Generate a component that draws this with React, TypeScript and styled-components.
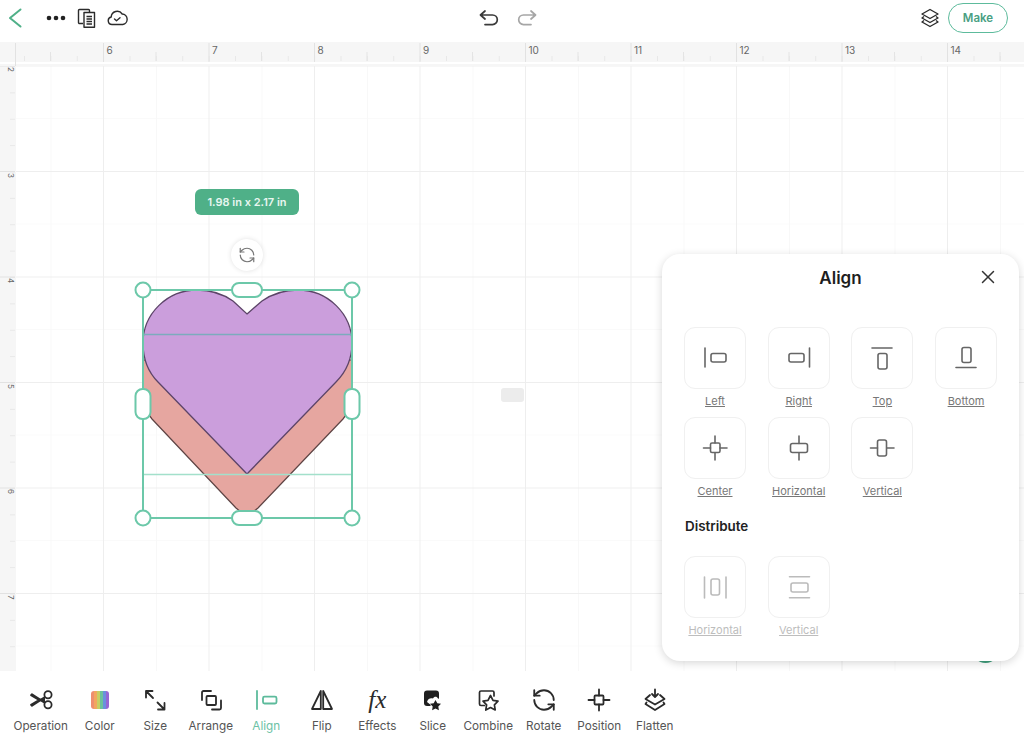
import React from 'react';
import styled, { createGlobalStyle } from 'styled-components';
import { RefreshCcw, X } from 'lucide-react';

const TEAL = '#5dbb9c';
const ICON = '#2b2b2b';

const GlobalStyle = createGlobalStyle`
  html, body {
    margin: 0;
    padding: 0;
    background: #fff;
  }
  body {
    font-family: Inter, "Liberation Sans", sans-serif;
  }
`;

const Page = styled.div`
  width: 1024px;
  height: 742px;
  display: flex;
  flex-direction: column;
  overflow: hidden;
  background: #fff;
`;

/* top bar */

const TopBar = styled.header`
  height: 42px;
  flex: none;
  display: flex;
  align-items: center;
  padding: 0 16px 6px 8px;
  box-sizing: border-box;
`;

const BarSide = styled.div<{ $end?: boolean }>`
  flex: 1;
  display: flex;
  align-items: center;
  justify-content: ${(p) => (p.$end ? 'flex-end' : 'flex-start')};
`;

const BarCenter = styled.div`
  display: flex;
  align-items: center;
  gap: 18px;
`;

const BackIcon = styled.svg`
  margin-right: 23px;
`;

const ToolIcon = styled.svg<{ $gap?: number }>`
  margin-right: ${(p) => p.$gap ?? 0}px;
  flex: none;
`;

const MakeButton = styled.button`
  width: 60px;
  height: 30px;
  margin-left: 8px;
  border: 1.5px solid ${TEAL};
  border-radius: 15px;
  background: #fff;
  color: #4a9f83;
  font: 600 11.5px Inter, "Liberation Sans", sans-serif;
  padding: 0;
`;

/* rulers */

const TopRuler = styled.div`
  height: 24px;
  flex: none;
  display: flex;
  padding-left: 103.5px;
  box-sizing: border-box;
  background:
    linear-gradient(to right, #e2e2e2 1px, transparent 1px) 103px 1px / 105.5px 19px repeat-x,
    linear-gradient(to right, #e2e2e2 1px, transparent 1px) 15px 1px / 1100px 23px no-repeat,
    linear-gradient(to right, #e4e4e4 1px, transparent 1px) 50px 10px / 105.5px 9px repeat-x,
    linear-gradient(to right, #e8e8e8 1px, transparent 1px) 24px 14px / 26.375px 5px repeat-x,
    linear-gradient(to bottom, #f6f6f6 20px, #fff 20px, #fff 22px, #f6f6f6 22px);
`;

const RulerCell = styled.div`
  flex: none;
  width: 105.5px;
  padding: 2px 0 0 3px;
  box-sizing: border-box;
  font-size: 10px;
  line-height: 12px;
  color: #666;
`;

const Middle = styled.div`
  flex: 1;
  display: flex;
  min-height: 0;
`;

const SideRuler = styled.div`
  width: 16px;
  flex: none;
  display: flex;
  flex-direction: column;
  background:
    linear-gradient(to bottom, #e2e2e2 1px, transparent 1px) 0 105px / 15px 105.5px repeat-y,
    linear-gradient(to bottom, #e8e8e8 1px, transparent 1px) 10px 0 / 5px 26.375px repeat-y,
    #f6f6f6;
`;

const SideRulerCell = styled.div`
  flex: none;
  height: 105.5px;
  padding: 1px 0 0 1px;
  box-sizing: border-box;
  writing-mode: vertical-rl;
  font-size: 8px;
  line-height: 10px;
  color: #666;
`;

/* canvas */

const Canvas = styled.main`
  flex: 1;
  position: relative;
  overflow: hidden;
  background:
    linear-gradient(to right, #eeeeee 1px, transparent 1px) 87px 0 / 105.5px 100% repeat-x,
    linear-gradient(to bottom, #eeeeee 1px, transparent 1px) 0 105px / 100% 105.5px repeat-y,
    linear-gradient(to right, #f8f8f8 1px, transparent 1px) 34.5px 0 / 105.5px 100% repeat-x,
    linear-gradient(to bottom, #fafafa 1px, transparent 1px) 0 52px / 100% 105.5px repeat-y,
    #fff;
`;

const Artwork = styled.svg`
  position: absolute;
  left: 104px;
  top: 204px;
`;

const SizeBadge = styled.div`
  position: absolute;
  left: 179px;
  top: 123px;
  width: 104px;
  height: 26px;
  border-radius: 6px;
  background: #4fb088;
  color: #e8f6f0;
  font-size: 11px;
  font-weight: 600;
  line-height: 26px;
  text-align: center;
`;

const RotateButton = styled.div`
  position: absolute;
  left: 215px;
  top: 173px;
  width: 32px;
  height: 32px;
  border-radius: 50%;
  background: #fff;
  box-shadow: 0 0 5px rgba(0, 0, 0, 0.12);
  display: flex;
  align-items: center;
  justify-content: center;
  color: #777;
`;

const GhostChip = styled.div`
  position: absolute;
  left: 485px;
  top: 322px;
  width: 23px;
  height: 14px;
  border-radius: 3px;
  background: #ececec;
`;

const HiddenFab = styled.div`
  position: absolute;
  left: 956px;
  top: 570px;
  width: 27px;
  height: 27px;
  border-radius: 50%;
  background: #3f9f7c;
`;

/* align panel */

const Panel = styled.section`
  position: absolute;
  left: 646px;
  top: 188px;
  width: 357px;
  height: 407px;
  padding: 0 22px;
  box-sizing: border-box;
  border-radius: 18px;
  background: #fff;
  box-shadow: 0 2px 8px rgba(0, 0, 0, 0.16);
`;

const PanelHeader = styled.div`
  height: 73px;
  display: flex;
  align-items: flex-start;
  justify-content: center;
  position: relative;
`;

const PanelTitle = styled.h2`
  margin: 14px 0 0;
  font-size: 17px;
  line-height: 20px;
  font-weight: 600;
  color: #1d1d1d;
`;

const CloseButton = styled.div`
  position: absolute;
  right: -2px;
  top: 12px;
  color: #333;
  display: flex;
`;

const TileGrid = styled.div`
  display: grid;
  grid-template-columns: repeat(4, 62px);
  column-gap: 21.7px;
  row-gap: 9px;
`;

const Tile = styled.div`
  display: flex;
  flex-direction: column;
  align-items: center;
`;

const TileBox = styled.div`
  width: 62px;
  height: 62px;
  box-sizing: border-box;
  border: 1px solid #f0f0f0;
  border-radius: 11px;
  display: flex;
  align-items: center;
  justify-content: center;
`;

const TileLabel = styled.span<{ $muted?: boolean }>`
  margin-top: 5px;
  font-size: 11px;
  line-height: 14px;
  white-space: nowrap;
  text-decoration: underline;
  color: ${(p) => (p.$muted ? '#bdbdbd' : '#777')};
`;

const SectionTitle = styled.h3`
  margin: 20px 0 22px 1px;
  font-size: 13.4px;
  line-height: 16px;
  font-weight: 600;
  color: #222;
`;

/* bottom toolbar */

const BottomBar = styled.nav`
  height: 71px;
  flex: none;
  display: flex;
  padding: 16px 0 0 13px;
  box-sizing: border-box;
  background: #fff;
`;

const ToolItem = styled.div<{ $active?: boolean }>`
  flex: none;
  width: 55.5px;
  display: flex;
  flex-direction: column;
  align-items: center;
  gap: 6px;
  color: ${(p) => (p.$active ? '#6cc2a5' : '#555')};

  &:first-child {
    margin-right: 3.5px;
  }
`;

const ToolLabel = styled.span`
  font-size: 11.7px;
  line-height: 14px;
  white-space: nowrap;
`;

const FxGlyph = styled.span`
  height: 26px;
  font: italic 25px/25px "Liberation Serif", serif;
  color: #2b2b2b;
`;

const AlignGlyph = ({ children, muted }: { children: React.ReactNode; muted?: boolean }) => (
  <svg width="30" height="30" viewBox="0 0 30 30" fill="none" stroke={muted ? '#bbb' : '#666'} strokeWidth="1.6" strokeLinecap="round">
    {children}
  </svg>
);

const alignOptions = [
  { label: 'Left', glyph: <><path d="M5 5v19" /><rect x="11" y="10.500" width="15" height="8.500" rx="2" /></> },
  { label: 'Right', glyph: <><path d="M25.500 5v19" /><rect x="5" y="10.500" width="15" height="8.500" rx="2" /></> },
  { label: 'Top', glyph: <><path d="M5 5h20" /><rect x="11" y="10.500" width="9" height="15.500" rx="2" /></> },
  { label: 'Bottom', glyph: <><path d="M5 24.500h20" /><rect x="11" y="4.500" width="9" height="15" rx="2" /></> },
  { label: 'Center', glyph: <><path d="M15 3v7M15 20v7M3.500 15h7M20 15h7" /><rect x="10.500" y="10" width="9.500" height="9.500" rx="1.500" /></> },
  { label: 'Horizontal', glyph: <><path d="M15 3v7.500M15 20v7" /><rect x="6.500" y="10.500" width="17" height="9" rx="2" /></> },
  { label: 'Vertical', glyph: <><path d="M3.500 15h7M20 15h7" /><rect x="10.500" y="7" width="9" height="16" rx="2" /></> },
];

const distributeOptions = [
  { label: 'Horizontal', glyph: <><path d="M4.500 5v21M26 5v21" /><rect x="11" y="7" width="8.500" height="16" rx="2" /></> },
  { label: 'Vertical', glyph: <><path d="M5.500 4.700h20M5.500 25.700h20" /><rect x="7" y="11" width="17" height="9" rx="2" /></> },
];

const Icon = ({ children, color = ICON, sw = 1.8 }: { children: React.ReactNode; color?: string; sw?: number }) => (
  <svg width="26" height="26" viewBox="0 0 26 26" fill="none" stroke={color} strokeWidth={sw} strokeLinecap="round" strokeLinejoin="round">
    {children}
  </svg>
);

const tools: { label: string; active?: boolean; icon: React.ReactNode }[] = [
  {
    label: 'Operation',
    icon: (
      <svg width="26" height="26" viewBox="0 0 26 26" fill="none" stroke={ICON} strokeWidth="1.800">
        <circle cx="20" cy="7.800" r="3.600" />
        <circle cx="20" cy="17.800" r="3.600" />
        <path d="M17 10 12.500 12.800 4 7.200 3 8.200 11 13 3 17.800 4 18.800 12.500 13.200 17 16" fill="#2b2b2b" strokeLinejoin="round" />
      </svg>
    ),
  },
  {
    label: 'Color',
    icon: (
      <svg width="26" height="26" viewBox="0 0 26 26">
        <defs>
          <clipPath id="swatch">
            <rect x="4" y="4" width="18" height="18" rx="3" />
          </clipPath>
        </defs>
        <g clipPath="url(#swatch)">
          <rect x="4" y="4" width="3" height="18" fill="#ee8f6e" />
          <rect x="7" y="4" width="3" height="18" fill="#f2a65f" />
          <rect x="10" y="4" width="3" height="18" fill="#c7cf63" />
          <rect x="13" y="4" width="3" height="18" fill="#6cc39b" />
          <rect x="16" y="4" width="3" height="18" fill="#6a92dd" />
          <rect x="19" y="4" width="3" height="18" fill="#9668d4" />
        </g>
      </svg>
    ),
  },
  {
    label: 'Size',
    icon: (
      <Icon>
        <path d="M4 4l7 7M4 4h6.500M4 4v6.500M22.500 22.500l-7-7M22.500 22.500H16M22.500 22.500V16" />
      </Icon>
    ),
  },
  {
    label: 'Arrange',
    icon: (
      <Icon>
        <path d="M4 13V5.500A1.500 1.500 0 0 1 5.500 4H13M23 13.500V21a1.500 1.500 0 0 1-1.500 1.500H14" />
        <rect x="8.500" y="9" width="9.500" height="9" rx="1" />
      </Icon>
    ),
  },
  {
    label: 'Align',
    active: true,
    icon: (
      <Icon color={TEAL}>
        <path d="M4 4v18" />
        <rect x="10" y="9.700" width="13.500" height="6.800" rx="1.500" />
      </Icon>
    ),
  },
  {
    label: 'Flip',
    icon: (
      <Icon>
        <path d="M11.800 4 3 22h8.800zM14.200 4 23 22h-8.800z" />
      </Icon>
    ),
  },
  { label: 'Effects', icon: <FxGlyph>fx</FxGlyph> },
  {
    label: 'Slice',
    icon: (
      <svg width="26" height="26" viewBox="0 0 26 26">
        <rect x="4" y="3.500" width="15" height="15.500" rx="3" fill="#1f1f1f" />
        <path d="M7 15c1-4 4-4 6-3.500 1-2.500 4-2.500 5 0l4 1-3 3.500.6 5-4.600-2.300-4.600 2.300.2-3.300z" fill="#fff" />
        <path d="m15.500 13 1.800 3.200 3.700.6-2.700 2.700.6 3.700-3.400-1.800-3.400 1.800.6-3.700-2.700-2.700 3.700-.6z" fill="#1f1f1f" />
      </svg>
    ),
  },
  {
    label: 'Combine',
    icon: (
      <Icon sw={1.700}>
        <path d="M9.500 18.500H6a1.500 1.500 0 0 1-1.500-1.500V5.500A1.500 1.500 0 0 1 6 4h11.500A1.500 1.500 0 0 1 19 5.500V9" />
        <path d="m15.500 8.500 2.500 4.800 5 .8-3.600 3.700.8 5.200-4.700-2.400-4.700 2.400.8-5.200-3.600-3.700 5-.8z" fill="#fff" />
      </Icon>
    ),
  },
  {
    label: 'Rotate',
    icon: <RefreshCcw size={26} strokeWidth={1.700} color={ICON} />,
  },
  {
    label: 'Position',
    icon: (
      <Icon>
        <path d="M13 2.500v6M13 17.500v6M2.500 13h6M17.500 13h6" />
        <rect x="8.500" y="8.500" width="9" height="9" rx="1" />
      </Icon>
    ),
  },
  {
    label: 'Flatten',
    icon: (
      <Icon>
        <path d="M13 2.500v7M10 7l3 3 3-3" />
        <path d="M8 8 3.500 12 13 17.500 22.500 12 18 8" />
        <path d="M4.500 15.500 3.500 17 13 23l9.500-6-1-1.500" />
      </Icon>
    ),
  },
];

const Handle = ({ x, y, wide }: { x: number; y: number; wide?: boolean }) => (
  <rect
    x={x - (wide ? 15 : 7.5)}
    y={y - (wide ? 7 : 15)}
    width={wide ? 30 : 15}
    height={wide ? 14 : 30}
    rx="7"
    fill="#fff"
    stroke="#6cc8a9"
    strokeWidth="2"
  />
);

const App = () => (
  <Page>
    <GlobalStyle />
    <TopBar>
      <BarSide>
        <BackIcon width="15" height="20" viewBox="0 0 15 20" fill="none" stroke="#4fb088" strokeWidth="2" strokeLinecap="round" strokeLinejoin="round">
          <path d="M12.500 1.500 2 10l10.500 8.500" />
        </BackIcon>
        <ToolIcon width="20" height="6" viewBox="0 0 20 6" fill="#222" $gap={11}>
          <circle cx="3" cy="3" r="2.300" />
          <circle cx="10" cy="3" r="2.300" />
          <circle cx="17" cy="3" r="2.300" />
        </ToolIcon>
        <ToolIcon width="19" height="20" viewBox="0 0 19 20" fill="none" stroke="#2b2b2b" strokeWidth="1.400" strokeLinejoin="round" $gap={11}>
          <path d="M6 15.500H2.500a1 1 0 0 1-1-1V2.500a1 1 0 0 1 1-1h9a1 1 0 0 1 1 1V4" />
          <path d="M7 4.500h10.500v14.800H7z" />
          <path d="M9.500 8.500h5.500M9.500 11h5.500M9.500 13.500h5.500M9.500 16h5.500" />
        </ToolIcon>
        <ToolIcon width="21" height="16" viewBox="0 0 21 16" fill="none" stroke="#2b2b2b" strokeWidth="1.400" strokeLinecap="round" strokeLinejoin="round">
          <path d="M15.800 14.500H5a3.800 3.800 0 0 1-.8-7.500 6 6 0 0 1 11-3 5.300 5.300 0 0 1 .6 10.500z" />
          <path d="m7.500 9 2 1.800 3.500-3" />
        </ToolIcon>
      </BarSide>
      <BarCenter>
        <svg width="20" height="16" viewBox="0 0 20 16" fill="none" stroke="#3a3a3a" strokeWidth="1.700" strokeLinecap="round" strokeLinejoin="round">
          <path d="M6 1 1.500 5 6 9M1.500 5H13.500a4.800 4.800 0 0 1 0 9.600H6" />
        </svg>
        <svg width="20" height="16" viewBox="0 0 20 16" fill="none" stroke="#a6a6a6" strokeWidth="1.700" strokeLinecap="round" strokeLinejoin="round">
          <path d="M14 1l4.500 4L14 9M18.500 5H6.500a4.800 4.800 0 0 0 0 9.600H14" />
        </svg>
      </BarCenter>
      <BarSide $end>
        <ToolIcon width="20" height="20" viewBox="0 0 20 20" fill="none" stroke="#2b2b2b" strokeWidth="1.400" strokeLinejoin="round">
          <path d="M10 1.500 18 6l-8 4.500L2 6z" />
          <path d="M4 8.500 2 10l8 4.500 8-4.500-2-1.500" />
          <path d="M4 12.500 2 14l8 4.500 8-4.500-2-1.500" />
        </ToolIcon>
        <MakeButton>Make</MakeButton>
      </BarSide>
    </TopBar>

    <TopRuler>
      {[6, 7, 8, 9, 10, 11, 12, 13, 14].map((n) => (
        <RulerCell key={n}>{n}</RulerCell>
      ))}
    </TopRuler>

    <Middle>
      <SideRuler>
        {[2, 3, 4, 5, 6, 7].map((n) => (
          <SideRulerCell key={n}>{n}</SideRulerCell>
        ))}
      </SideRuler>

      <Canvas>
        <Artwork width="250" height="260" viewBox="120 270 250 260">
          <path
            d="M143 360V395C143 405 146 412 152 419L236 508Q247 518 258 508L343 419C349 412 352 405 352 395V360Z"
            fill="#e6a6a0"
            stroke="#5e4444"
            strokeWidth="1.200"
          />
          <path
            d="M247 314L262 301C272 294 285 290 298 290C328 290 352 314 352 343C352 358 346 372 336 382L247 474L158 382C148 372 143 358 143 343C143 314 167 290 197 290C210 290 223 294 233 301Z"
            fill="#cb9edc"
            stroke="#5c4468"
            strokeWidth="1.300"
          />
          <path d="M143 334.500H352" stroke="#7cabbd" strokeWidth="1.500" />
          <path d="M143 474.500H352" stroke="#a3e0cb" strokeWidth="1.500" />
          <rect x="143" y="290" width="209" height="228" fill="none" stroke="#6cc8a9" strokeWidth="2" />
          <circle cx="143" cy="290" r="7.500" fill="#fff" stroke="#6cc8a9" strokeWidth="2" />
          <circle cx="352" cy="290" r="7.500" fill="#fff" stroke="#6cc8a9" strokeWidth="2" />
          <circle cx="143" cy="518" r="7.500" fill="#fff" stroke="#6cc8a9" strokeWidth="2" />
          <circle cx="352" cy="518" r="7.500" fill="#fff" stroke="#6cc8a9" strokeWidth="2" />
          <Handle x={247} y={290} wide />
          <Handle x={247} y={518} wide />
          <Handle x={143} y={404} />
          <Handle x={352} y={404} />
        </Artwork>
        <SizeBadge>1.98 in x 2.17 in</SizeBadge>
        <RotateButton>
          <RefreshCcw size={18} strokeWidth={1.600} />
        </RotateButton>
        <GhostChip />
        <HiddenFab />

        <Panel>
          <PanelHeader>
            <PanelTitle>Align</PanelTitle>
            <CloseButton>
              <X size={22} strokeWidth={1.600} />
            </CloseButton>
          </PanelHeader>
          <TileGrid>
            {alignOptions.map((o) => (
              <Tile key={o.label}>
                <TileBox>
                  <AlignGlyph>{o.glyph}</AlignGlyph>
                </TileBox>
                <TileLabel>{o.label}</TileLabel>
              </Tile>
            ))}
          </TileGrid>
          <SectionTitle>Distribute</SectionTitle>
          <TileGrid>
            {distributeOptions.map((o) => (
              <Tile key={o.label}>
                <TileBox>
                  <AlignGlyph muted>{o.glyph}</AlignGlyph>
                </TileBox>
                <TileLabel $muted>{o.label}</TileLabel>
              </Tile>
            ))}
          </TileGrid>
        </Panel>
      </Canvas>
    </Middle>

    <BottomBar>
      {tools.map((t) => (
        <ToolItem key={t.label} $active={t.active}>
          {t.icon}
          <ToolLabel>{t.label}</ToolLabel>
        </ToolItem>
      ))}
    </BottomBar>
  </Page>
);

export default App;
